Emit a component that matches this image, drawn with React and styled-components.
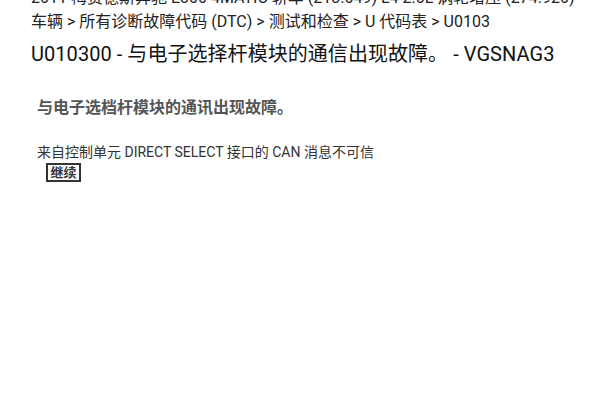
import React from "react"
import styled, { createGlobalStyle } from "styled-components"

const GlobalStyle = createGlobalStyle`
  body {
    margin: 0;
    background: #fff;
    font-family: Roboto, "Noto Sans CJK SC", sans-serif;
    color: #222;
  }
`

const Page = styled.div`
  padding: 0 31px;
  margin-top: -14px;
`

const Crumb = styled.div`
  font-size: 16px;
  line-height: 24px;
  color: #222;
  white-space: nowrap;
`

const Title = styled.h1`
  margin: 6px 0 0;
  font-size: 20px;
  font-weight: 400;
  line-height: 28px;
  letter-spacing: 0.05px;
  color: #111;
  white-space: nowrap;
`

const Section = styled.div`
  padding: 0 6px;
  margin-top: 28px;
`

const Heading = styled.h2`
  margin: 0;
  font-size: 16px;
  font-weight: 700;
  line-height: 24px;
  color: #555;
`

const Body = styled.p`
  margin: 22px 0 0;
  font-size: 14px;
  line-height: 20px;
  color: #333;
`

const Button = styled.button`
  display: flex;
  align-items: center;
  justify-content: center;
  box-sizing: border-box;
  width: 35px;
  height: 19px;
  margin: 1px 0 0 9px;
  padding: 0;
  font-family: Roboto, "Noto Sans CJK SC", sans-serif;
  font-size: 13px;
  font-weight: 700;
  line-height: 1;
  color: #333;
  background: #fff;
  border: 2px solid #333;
  border-radius: 0;
  cursor: pointer;
`

export default function App() {
  return (
    <>
      <GlobalStyle />
      <Page>
        <Crumb>2011 梅赛德斯奔驰 E300 4MATIC 轿车 (213.049) L4 2.0L 涡轮增压 (274.920)</Crumb>
        <Crumb>车辆 &gt; 所有诊断故障代码 (DTC) &gt; 测试和检查 &gt; U 代码表 &gt; U0103</Crumb>
        <Title>U010300 - 与电子选择杆模块的通信出现故障。 - VGSNAG3</Title>
        <Section>
          <Heading>与电子选档杆模块的通讯出现故障。</Heading>
          <Body>来自控制单元 DIRECT SELECT 接口的 CAN 消息不可信</Body>
          <Button>继续</Button>
        </Section>
      </Page>
    </>
  )
}
